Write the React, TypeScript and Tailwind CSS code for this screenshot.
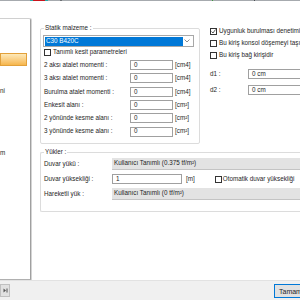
import React from "react";

const Check = ({ checked = false }: { checked?: boolean }) => (
  <span className="w-[7px] h-[7px] border border-[#333] bg-white flex items-center justify-center shrink-0">
    {checked && (
      <svg width="5" height="5" viewBox="0 0 10 10">
        <path d="M1 5 L4 8 L9 1" stroke="#333" strokeWidth="1.6" fill="none" />
      </svg>
    )}
  </span>
);

const Field = ({ value, className = "" }: { value: string; className?: string }) => (
  <div className={`h-[10px] border border-[#a0a0a0] bg-white flex items-center pl-[3px] ${className}`}>{value}</div>
);

const ReadOnly = ({ value }: { value: string }) => (
  <div className="h-[12px] flex-1 bg-[#e3e3e3] border-b border-[#c4c4c4] flex items-center pl-[2px]">{value}</div>
);

const rows = [
  { label: "2 aksı atalet momenti :", unit: "[cm4]" },
  { label: "3 aksı atalet momenti :", unit: "[cm4]" },
  { label: "Burulma atalet momenti :", unit: "[cm4]" },
  { label: "Enkesit alanı :", unit: "[cm²]" },
  { label: "2 yönünde kesme alanı :", unit: "[cm²]" },
  { label: "3 yönünde kesme alanı :", unit: "[cm²]" },
];

const App = () => {
  return (
    <div className="w-[300px] h-[300px] bg-white flex flex-col overflow-hidden font-['Liberation_Sans',Arial,sans-serif] text-[6.3px] leading-none text-[#1e1e1e]">
      {/* top strip */}
      <div className="h-[1px] flex bg-[#a6aaae] shrink-0">
        <div className="w-[30px]" />
        <div className="w-[3px] bg-[#2aa8a8]" />
        <div className="w-[12px] bg-[#c8141c]" />
        <div className="w-[3px] bg-[#2aa8a8]" />
        <div className="w-[12px]" />
        <div className="w-[2px] bg-[#6e7276]" />
        <div className="w-[150px]" />
        <div className="w-[1px] bg-[#3c9a3c]" />
        <div className="w-[41px]" />
        <div className="w-[1px] bg-[#4a4e52]" />
      </div>

      <div className="flex h-[279px] shrink-0">
        {/* left panel */}
        <div className="w-[31px] mt-[17px] border-t border-b border-r border-t-[#d0d0d0] border-b-[#b0b0b0] border-r-[#a0a0a0] shadow-[1px_0_0_#d4d4d4] rounded-tr-[2px] flex flex-col shrink-0">
          <div className="h-[34px]" />
          <div className="h-[13px] w-[27px] border border-[#e2a03a] bg-gradient-to-b from-[#fde9b8] to-[#f6b64a]" />
          <div className="h-[22px]" />
          <div>ni</div>
          <div className="h-[56px]" />
          <div>m</div>
        </div>

        {/* content */}
        <div className="flex-1 pl-[9px] pt-[27px] flex flex-col">
          <div className="flex">
            {/* Statik malzeme */}
            <div className="relative w-[160px] h-[116px] border border-[#dcdcdc] rounded-[2px] pl-[2px] pt-[6px] flex flex-col shrink-0">
              <span className="absolute -top-[4px] left-[3px] bg-white px-[1px]">Statik malzeme :</span>
              <div className="w-[151px] h-[12px] border border-[#a8a8a8] bg-white flex items-center pl-[1px] pr-[3px]">
                <div className="w-[138px] h-[9px] bg-[#0078d7] text-white flex items-center pl-[1px]">C30 B420C</div>
                <svg className="ml-auto" width="6" height="4" viewBox="0 0 6 4">
                  <path d="M0.5 0.5 L3 3 L5.5 0.5" stroke="#707070" strokeWidth="0.8" fill="none" />
                </svg>
              </div>
              <div className="flex items-center gap-[2px] ml-[1px] mt-[2px]">
                <Check />
                <span>Tanımlı kesit parametreleri</span>
              </div>
              <div className="grid grid-cols-[84px_43px_auto] gap-y-[3.33px] gap-x-[2px] items-center ml-[1px] mt-[4px]">
                {rows.map((r) => (
                  <React.Fragment key={r.label}>
                    <span>{r.label}</span>
                    <Field value="0" />
                    <span>{r.unit}</span>
                  </React.Fragment>
                ))}
              </div>
            </div>

            {/* right column */}
            <div className="ml-[10px] flex flex-col flex-1 min-w-0 whitespace-nowrap">
              <div className="flex flex-col gap-[5px]">
                <div className="flex items-center gap-[2px]">
                  <Check checked />
                  <span>Uygunluk burulması denetimi</span>
                </div>
                <div className="flex items-center gap-[2px]">
                  <Check />
                  <span>Bu kiriş konsol döşemeyi taşıyor</span>
                </div>
                <div className="flex items-center gap-[2px]">
                  <Check />
                  <span>Bu kiriş bağ kirişidir</span>
                </div>
              </div>
              <div className="flex flex-col gap-[6px] mt-[10px]">
                <div className="flex items-center">
                  <span className="w-[38px] shrink-0">d1 :</span>
                  <Field value="0 cm" className="flex-1" />
                </div>
                <div className="flex items-center">
                  <span className="w-[38px] shrink-0">d2 :</span>
                  <Field value="0 cm" className="flex-1" />
                </div>
              </div>
            </div>
          </div>

          {/* Yükler */}
          <div className="relative mt-[8px] h-[60px] border border-r-0 border-[#dcdcdc] rounded-l-[2px] pl-[3px] pt-[5px] flex flex-col gap-[4px]">
            <span className="absolute -top-[4px] left-[3px] bg-white px-[1px]">Yükler :</span>
            <div className="flex items-center">
              <span className="w-[68px] shrink-0">Duvar yükü :</span>
              <ReadOnly value="Kullanıcı Tanımlı (0.375 tf/m²)" />
            </div>
            <div className="flex items-center whitespace-nowrap">
              <span className="w-[68px] shrink-0">Duvar yüksekliği :</span>
              <Field value="1" className="w-[70px]" />
              <span className="ml-[4px]">[m]</span>
              <div className="flex items-center gap-[1px] ml-[20px]">
                <Check />
                <span>Otomatik duvar yüksekliği</span>
              </div>
            </div>
            <div className="flex items-center">
              <span className="w-[68px] shrink-0">Hareketli yük :</span>
              <ReadOnly value="Kullanıcı Tanımlı (0 tf/m²)" />
            </div>
          </div>
        </div>
      </div>

      {/* bottom bar */}
      <div className="flex-1 bg-[#f0f0f0] border-t border-[#e2e2e2] flex items-start justify-between pt-[3px]">
        <div className="w-[10px] h-[13px] bg-[#e1e1e1] border border-[#c0c0c0] flex items-center justify-center">
          <svg width="5" height="5" viewBox="0 0 5 5">
            <path d="M0.5 0.5 L3 2.5 L0.5 4.5 Z" fill="#555" />
            <rect x="3.5" y="0.5" width="1" height="4" fill="#555" />
          </svg>
        </div>
        <div className="w-[30px] h-[14px] bg-[#e1e1e1] border border-[#0078d7] flex items-center pl-[4px] mr-[-4px] text-[7px]">
          Tamam
        </div>
      </div>
    </div>
  );
};

export default App;
